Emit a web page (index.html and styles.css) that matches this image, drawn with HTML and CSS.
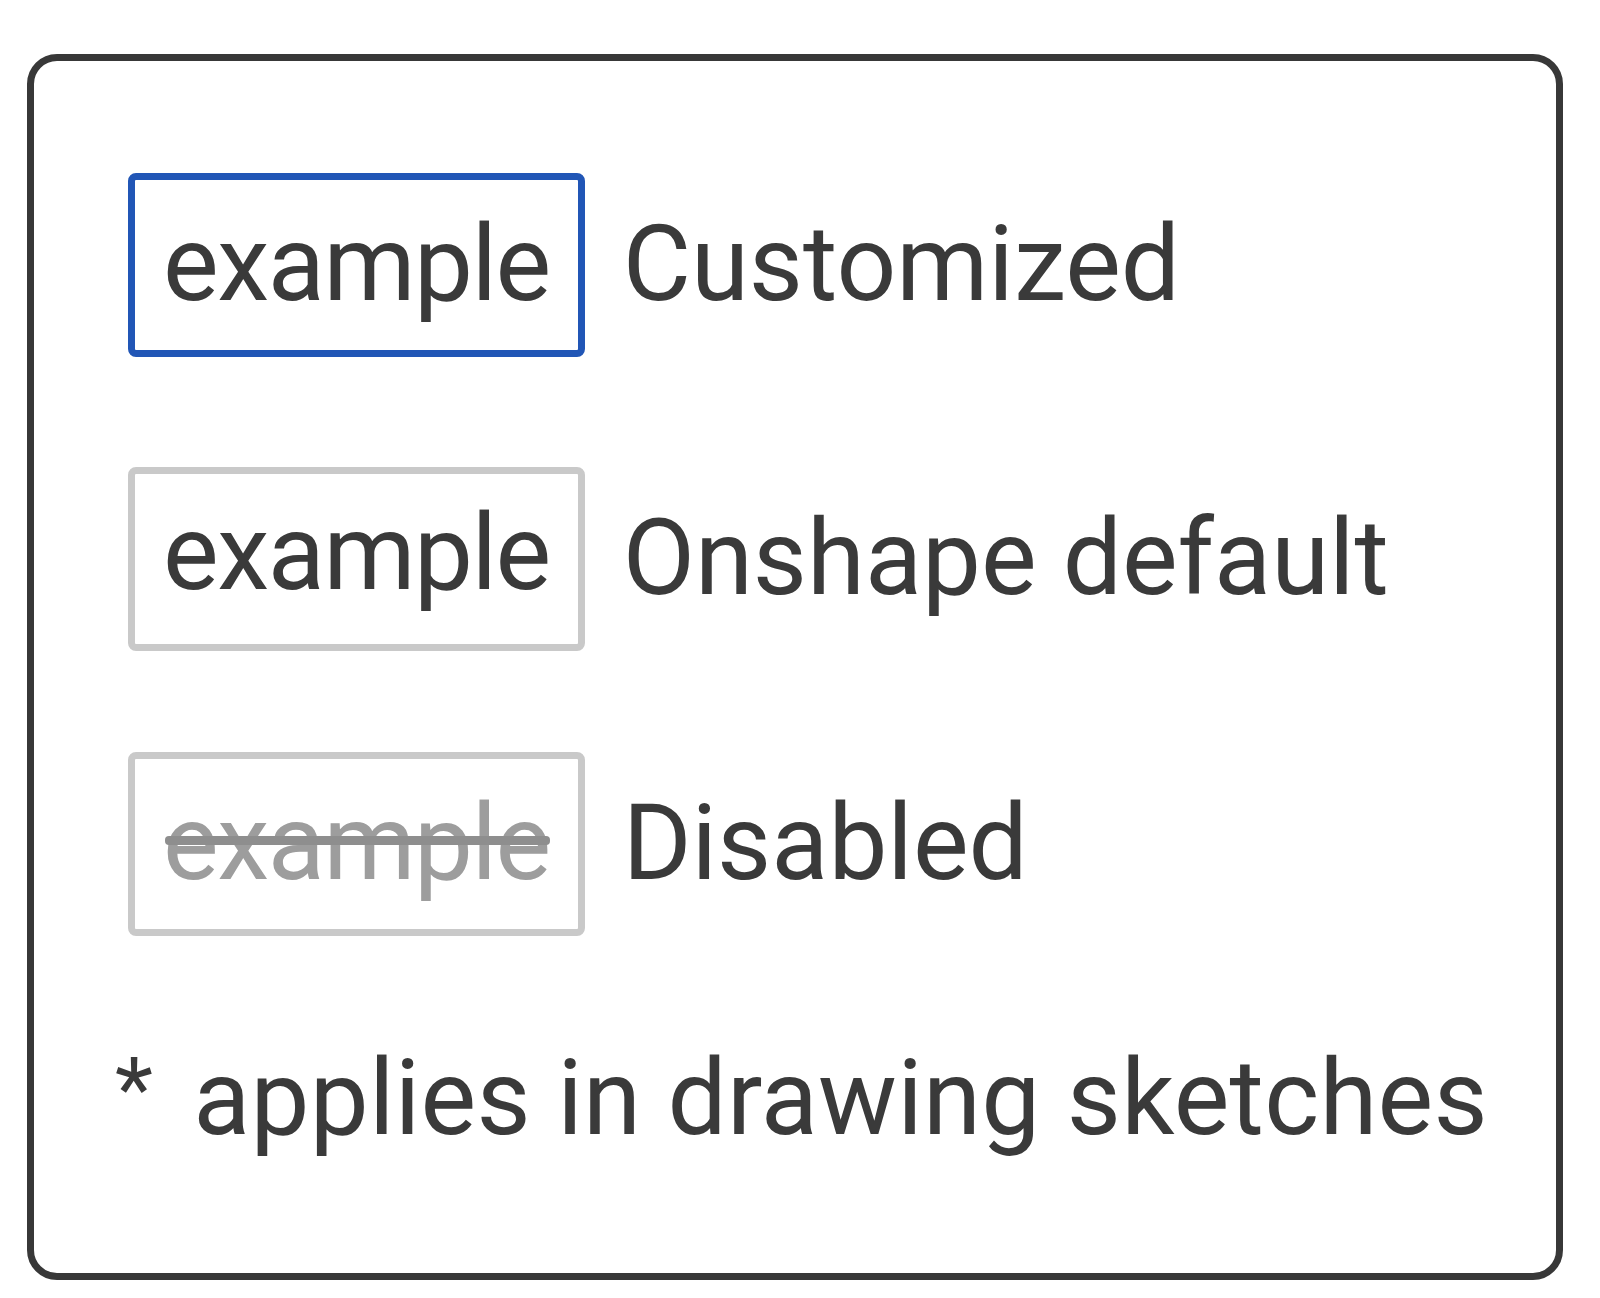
FILE: index.html
```
<!DOCTYPE html>
<html lang="en">
<head>
<meta charset="utf-8">
<title>Legend</title>
<link rel="stylesheet" href="styles.css">
</head>
<body>
<div class="panel">
  <div class="row row-first">
    <span class="sample sample-custom">example</span>
    <span class="label">Customized</span>
  </div>
  <div class="row row-second">
    <span class="sample">example</span>
    <span class="label">Onshape default</span>
  </div>
  <div class="row row-third">
    <span class="sample sample-disabled"><span class="strike">example</span></span>
    <span class="label">Disabled</span>
  </div>
  <div class="note"><span class="star">*</span>applies in drawing sketches</div>
</div>
</body>
</html>
```
FILE: styles.css
```
html, body {
  margin: 0;
  padding: 0;
  background: #ffffff;
}

body {
  font-family: Roboto, "Liberation Sans", sans-serif;
  color: #3a3a3a;
}

.panel {
  box-sizing: border-box;
  width: 1536px;
  height: 1226px;
  margin: 54px 0 0 27px;
  border: 7px solid #383838;
  border-radius: 30px;
  padding: 112px 0 0 94px;
  display: flex;
  flex-direction: column;
}

.row {
  display: flex;
  align-items: center;
  gap: 38px;
  height: 184px;
}

.row-first {
  margin-bottom: 110px;
}

.row-second {
  margin-bottom: 101px;
}

.sample {
  box-sizing: border-box;
  height: 184px;
  padding: 0 28px;
  border: 7px solid #c9c9c9;
  border-radius: 8px;
  font-size: 105px;
  line-height: 170px;
  letter-spacing: -1.5px;
  color: #3a3a3a;
  white-space: nowrap;
}

.row-second .sample {
  line-height: 160px;
}

.sample-custom {
  border-color: #2156b6;
}

.sample-disabled {
  color: #9d9d9d;
}

.strike {
  position: relative;
  display: inline-block;
  line-height: 123px;
  vertical-align: baseline;
}

.strike::after {
  content: "";
  position: absolute;
  left: 2px;
  right: 0;
  top: 54px;
  height: 9px;
  border-radius: 4px;
  background: #8e8e8e;
}

.label {
  font-size: 105px;
  line-height: 170px;
  letter-spacing: 0;
  white-space: nowrap;
}

.note {
  margin: 101px 0 0 -13px;
  font-size: 105px;
  line-height: 123px;
  letter-spacing: 0.25px;
  white-space: nowrap;
}

.star {
  font-size: 88px;
  line-height: 0;
  vertical-align: 15px;
  margin-right: 40px;
}
```
